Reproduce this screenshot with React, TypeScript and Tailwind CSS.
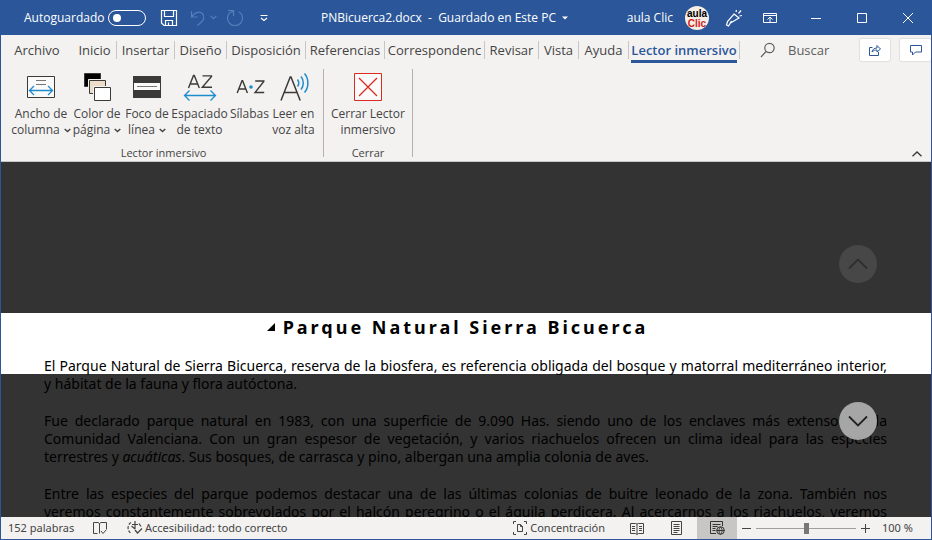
import React from 'react';
import clsx from 'clsx';

const tabs = [
  { name: 'Archivo', width: 'w-[72px]', divider: false },
  { name: 'Inicio', width: 'w-[44px]', divider: true },
  { name: 'Insertar', width: 'w-[58px]', divider: true },
  { name: 'Diseño', width: 'w-[52px]', divider: true },
  { name: 'Disposición', width: 'w-[79px]', divider: true },
  { name: 'Referencias', width: 'w-[79px]', divider: true },
  { name: 'Correspondenc', width: 'w-[100px]', divider: true },
  { name: 'Revisar', width: 'w-[54px]', divider: true },
  { name: 'Vista', width: 'w-[40px]', divider: true },
  { name: 'Ayuda', width: 'w-[50px]', divider: true },
  { name: 'Lector inmersivo', width: 'w-[111px]', divider: true, active: true },
];

function Caret() {
  return (
    <svg className="ml-1 inline-block" width="7" height="5" viewBox="0 0 7 5" fill="none" stroke="#444" strokeWidth="1.4">
      <path d="M.7 .9 3.5 3.6 6.3 .9" />
    </svg>
  );
}

function RibbonButton({ icon, lines, caret, width }: { icon: React.ReactNode; lines: string[]; caret?: boolean; width: string }) {
  return (
    <button className={clsx('flex flex-col items-center gap-px leading-4 whitespace-nowrap', width)}>
      {icon}
      <span>
        {lines[0]}
        {lines[1] && <br />}
        {lines[1]}
        {caret && <Caret />}
      </span>
    </button>
  );
}

const iconProps = { width: 36, height: 36, viewBox: '0 0 36 36', fill: 'none', stroke: '#3b3a39' };

function ColumnWidthIcon() {
  return (
    <svg {...iconProps}>
      <path d="M4.500 7.500h27v21h-27z" fill="#fafafa" />
      <path d="M13 11.500h10M13 15.500h10" stroke="#797775" />
      <path d="M7 21.500h22M11 17l-4.500 4.500L11 26M25 17l4.500 4.500L25 26" stroke="#1e8bcd" strokeWidth="1.300" />
    </svg>
  );
}

function PageColorIcon() {
  return (
    <svg {...iconProps}>
      <path d="M5.500 4.500h16v13h-16z" fill="#000" />
      <path d="M9.500 10.500h18v14h-18z" fill="#f3f2f1" stroke="#f3f2f1" />
      <path d="M10.500 11.500h16v13h-16z" fill="#eddcc8" />
      <path d="M14.500 17.500h18v14h-18z" fill="#f3f2f1" stroke="#f3f2f1" />
      <path d="M15.500 18.500h16v13h-16z" fill="#fff" />
    </svg>
  );
}

function LineFocusIcon() {
  return (
    <svg {...iconProps}>
      <path d="M4 7h28v22H4z" fill="#3b3a39" stroke="none" />
      <path d="M5 14h26v7H5z" fill="#fafafa" stroke="none" />
      <path d="M8 17.500h20" stroke="#797775" />
    </svg>
  );
}

function TextSpacingIcon() {
  return (
    <svg {...iconProps}>
      <path d="m6.500 19 5-12.500h.8l5 12.500M8.200 15h7.400" strokeWidth="1.400" />
      <path d="M20.500 6.900h9v.6L20.300 18.300h9.700" strokeWidth="1.400" />
      <path d="M2.500 26.500h31M7.500 21.500l-5 5 5 5M28.500 21.500l5 5-5 5" stroke="#1e8bcd" strokeWidth="1.300" />
    </svg>
  );
}

function SyllablesIcon() {
  return (
    <svg {...iconProps}>
      <path d="m5.200 24 4.800-12.300h.6l4.800 12.300M6.800 20h7" strokeWidth="1.400" />
      <path d="M23.200 12h8.600v.5L23 23.500h9.200" strokeWidth="1.400" />
      <circle cx="19" cy="18" r="1.800" fill="#1e8bcd" stroke="none" />
    </svg>
  );
}

function ReadAloudIcon() {
  return (
    <svg {...iconProps}>
      <path d="m5 31.500 9.200-23.500h.8l9.200 23.500M8.300 23.500h12.600" strokeWidth="1.500" />
      <path d="M21.500 10.500c1.500 2 1.500 5 0 7M25 7.500c3 3.500 3 9.500 0 13M28.500 4.500c4.500 5 4.500 14 0 19" stroke="#1e8bcd" strokeWidth="1.500" />
    </svg>
  );
}

function CloseReaderIcon() {
  return (
    <svg {...iconProps} stroke="#d92b20">
      <path d="M4.500 4.500h27v27h-27z" fill="#fafafa" />
      <path d="m9 9 18 18M27 9 9 27" strokeWidth="1.300" />
    </svg>
  );
}

function TitleBar() {
  return (
    <header className="flex h-[35px] shrink-0 items-center bg-[#2b579a] text-white">
      <div className="flex w-[272px] items-center pl-[23px]">
        <label htmlFor="autosave" className="w-[84px]">Autoguardado</label>
        <input
          id="autosave"
          type="checkbox"
          className="h-4 w-[38px] appearance-none rounded-full border border-white before:ml-1 before:mt-[3px] before:block before:h-2 before:w-2 before:rounded-full before:bg-white"
        />
        <button aria-label="Guardar" className="ml-[14px]">
          <svg width="18" height="18" viewBox="0 0 18 18" fill="none" stroke="white" strokeWidth="1.200">
            <path d="M1.500 1.500h15v15H4l-2.500-2.500zM4.500 1.500v6h9v-6M5.500 16.500v-5h7v5M8.500 16.500v-3" />
          </svg>
        </button>
        <button aria-label="Deshacer" className="ml-3 flex items-center gap-1">
          <svg width="16" height="18" viewBox="0 0 16 18" fill="none" stroke="#557fb9" strokeWidth="1.200">
            <path d="M1.500 2v6h6M1.800 7.800C4 4 9 1.500 12.300 4.500c3 3 1 7-1 8.500L7.500 16.500" />
          </svg>
          <svg width="7" height="5" viewBox="0 0 7 5" fill="none" stroke="#557fb9" strokeWidth="1.200">
            <path d="M.7 .9 3.500 3.600 6.300 .9" />
          </svg>
        </button>
        <button aria-label="Rehacer" className="ml-[9px]">
          <svg width="18" height="18" viewBox="0 0 18 18" fill="none" stroke="#557fb9" strokeWidth="1.200">
            <path d="M2 1.500h5.500V7M7.500 2C3 3 1.500 6.500 1.500 9.500a7.500 7 0 0 0 15 0c0-3-1.500-5.500-3.500-6.500" />
          </svg>
        </button>
        <button aria-label="Personalizar" className="ml-4">
          <svg width="8" height="8" viewBox="0 0 8 8" fill="none" stroke="white" strokeWidth="1.200">
            <path d="M.5 1.500h7M1 4l3 2.500L7 4" />
          </svg>
        </button>
      </div>
      <div className="flex flex-1 items-center justify-center gap-[6px] whitespace-pre">
        <h1>PNBicuerca2.docx  -  Guardado en Este PC</h1>
        <svg width="6" height="4" viewBox="0 0 6 4" fill="white"><path d="M0 .5h6L3 3.500z" /></svg>
      </div>
      <div className="flex w-[315px] items-center justify-end">
        <span className="mr-3">aula Clic</span>
        <div className="flex h-6 w-6 flex-col items-center justify-center overflow-hidden rounded-full bg-[#f6ede4] pt-[2px] font-['Liberation_Sans',sans-serif] text-[10px] font-bold leading-[10px]">
          <span className="text-black">aula</span>
          <span className="text-[#d0201c]">Clic</span>
        </div>
        <button aria-label="Novedades" className="mr-[2px] ml-[14px] flex w-[22px] justify-center">
          <svg width="18" height="18" viewBox="0 0 18 18" fill="none" stroke="white" strokeWidth="1.200">
            <path d="m9 5 5 4-8.500 5L3.500 17 1.500 16l1-3.500zM5 14l1.500-2M11 3l.5-2M13.500 4.500 16 1.500M14.500 7l2.500-.5" />
          </svg>
        </button>
        <button aria-label="Opciones de la cinta" className="flex w-[46px] justify-center">
          <svg width="14" height="12" viewBox="0 0 14 12" fill="none" stroke="white">
            <path d="M.5 1.500h13v9H.5zM.5 3.500h13M7 10V5.500M4.500 7.500 7 5l2.500 2.500" />
          </svg>
        </button>
        <button aria-label="Minimizar" className="flex w-[46px] justify-center">
          <svg width="10" height="10" viewBox="0 0 10 10" stroke="white"><path d="M0 5.500h10" /></svg>
        </button>
        <button aria-label="Maximizar" className="flex w-[46px] justify-center">
          <svg width="10" height="10" viewBox="0 0 10 10" stroke="white" fill="none"><path d="M.5 .5h9v9h-9z" /></svg>
        </button>
        <button aria-label="Cerrar" className="flex w-[46px] justify-center">
          <svg width="10" height="10" viewBox="0 0 10 10" stroke="white"><path d="m0 0 10 10M10 0 0 10" /></svg>
        </button>
      </div>
    </header>
  );
}

function TabRow() {
  return (
    <nav className="flex h-[30px] items-start overflow-hidden pt-1 text-[13px]">
      {tabs.map((tab) => (
        <div key={tab.name} className={clsx('flex shrink-0 items-start', tab.width)}>
          <button
            className={clsx(
              'mx-auto flex h-6 items-start leading-[22px] whitespace-nowrap',
              tab.active && 'border-b-[3px] border-[#2b579a] font-semibold text-[#2b579a]'
            )}
          >
            {tab.name}
          </button>
          {tab.divider && <span className="mt-[2px] h-[18px] w-px bg-[#c8c6c4]" />}
        </div>
      ))}
      <label className="ml-[20px] flex flex-1 items-center gap-3 text-[#605e5c]">
        <svg width="16" height="22" viewBox="0 0 16 22" fill="none" stroke="#605e5c" strokeWidth="1.200">
          <circle cx="9.500" cy="9" r="4.700" />
          <path d="m6 12.500-5 5.500" />
        </svg>
        <input type="text" placeholder="Buscar" aria-label="Buscar" className="h-[22px] w-14 bg-transparent placeholder:text-[#605e5c]" />
      </label>
      <button aria-label="Compartir" className="flex h-[22px] w-[30px] shrink-0 items-center justify-center rounded-[2px] bg-white shadow-[0_0_1px_1px_#e1dfdd]">
        <svg width="12" height="12" viewBox="0 0 12 12" fill="none" stroke="#2b579a">
          <path d="M3.500 3.500h-3v8h9V8M3 8c.5-2.500 2-4 5-4V1.500L11.500 5 8 8V6C6 6 4.500 6.500 3 8z" />
        </svg>
      </button>
      <button aria-label="Comentarios" className="ml-[10px] flex h-[22px] w-[31px] shrink-0 items-center justify-center rounded-[2px] bg-white shadow-[0_0_1px_1px_#e1dfdd]">
        <svg width="12" height="12" viewBox="0 0 12 12" fill="none" stroke="#2b579a">
          <path d="M.5 1.500h11v6.500h-6l-3 3V8h-2z" />
        </svg>
      </button>
    </nav>
  );
}

function Ribbon() {
  return (
    <div className="flex h-[97px] items-start border-b border-[#c8c6c4] pt-1">
      <section className="flex h-[88px] flex-col justify-between border-r border-[#b3b0ad] pl-[10px] pr-[7px]">
        <div className="flex items-start">
          <RibbonButton icon={<ColumnWidthIcon />} lines={['Ancho de', 'columna']} caret width="w-[60px]" />
          <RibbonButton icon={<PageColorIcon />} lines={['Color de', 'página']} caret width="w-[52px]" />
          <RibbonButton icon={<LineFocusIcon />} lines={['Foco de', 'línea']} caret width="w-[48px]" />
          <RibbonButton icon={<TextSpacingIcon />} lines={['Espaciado', 'de texto']} width="w-[57px]" />
          <RibbonButton icon={<SyllablesIcon />} lines={['Sílabas']} width="w-[43px]" />
          <RibbonButton icon={<ReadAloudIcon />} lines={['Leer en', 'voz alta']} width="w-[45px]" />
        </div>
        <h2 className="text-center text-[11px] leading-[8px]">Lector inmersivo</h2>
      </section>
      <section className="flex h-[88px] w-[89px] flex-col items-center justify-between border-r border-[#b3b0ad]">
        <RibbonButton icon={<CloseReaderIcon />} lines={['Cerrar Lector', 'inmersivo']} width="w-[80px]" />
        <h2 className="text-[11px] leading-[8px]">Cerrar</h2>
      </section>
      <button aria-label="Contraer la cinta" className="mr-[9px] ml-auto self-end pb-1">
        <svg width="10" height="6" viewBox="0 0 10 6" fill="none" stroke="#3b3a39" strokeWidth="1.300">
          <path d="M.5 5.300 5 1l4.500 4.300" />
        </svg>
      </button>
    </div>
  );
}

function Document() {
  return (
    <main className="relative min-h-0 flex-1 overflow-hidden bg-[#333] font-['Noto_Sans',sans-serif] text-[14px] leading-[18px] text-black">
      <div className="h-[151px]" />
      <div className="h-[61px] bg-white pr-11 pl-[43px]">
        <h2 className="flex items-center justify-center gap-2 pr-4 pb-4 text-[18px] font-bold leading-7 tracking-[3px]">
          <svg width="8" height="8" viewBox="0 0 8 8"><path d="M8 0v8H0z" /></svg>
          Parque Natural Sierra Bicuerca
        </h2>
        <p className="whitespace-nowrap [text-align-last:justify]">
          El Parque Natural de Sierra Bicuerca, reserva de la biosfera, es referencia obligada del bosque y matorral mediterráneo interior,
        </p>
      </div>
      <div className="pt-px pr-11 pl-[43px] whitespace-nowrap">
        <p>y hábitat de la fauna y flora autóctona.</p>
        <p className="mt-[19px] [text-align-last:justify]">
          Fue declarado parque natural en 1983, con una superficie de 9.090 Has. siendo uno de los enclaves más extensos de la
        </p>
        <p className="[text-align-last:justify]">
          Comunidad Valenciana. Con un gran espesor de vegetación, y varios riachuelos ofrecen un clima ideal para las especies
        </p>
        <p>
          terrestres y <em>acuáticas</em>. Sus bosques, de carrasca y pino, albergan una amplia colonia de aves.
        </p>
        <p className="mt-[19px] [text-align-last:justify]">
          Entre las especies del parque podemos destacar una de las últimas colonias de buitre leonado de la zona. También nos
        </p>
        <p className="[text-align-last:justify]">
          veremos constantemente sobrevolados por el halcón peregrino o el águila perdicera. Al acercarnos a los riachuelos, veremos
        </p>
      </div>
      <button aria-label="Subir" className="absolute top-[83px] right-[54px] flex h-[38px] w-[38px] items-center justify-center rounded-full bg-[#474747]">
        <svg width="20" height="12" viewBox="0 0 20 12" fill="none" stroke="#2e2e2e" strokeWidth="1.800"><path d="m1 10.500 9-9 9 9" /></svg>
      </button>
      <button aria-label="Bajar" className="absolute top-[240px] right-[54px] flex h-[38px] w-[38px] items-center justify-center rounded-full bg-[#adadad]/95">
        <svg width="20" height="12" viewBox="0 0 20 12" fill="none" stroke="#222" strokeWidth="1.800"><path d="m1 1.500 9 9 9-9" /></svg>
      </button>
    </main>
  );
}

function StatusBar() {
  return (
    <footer className="flex h-[22px] shrink-0 items-center bg-[#f3f2f1] font-['Noto_Sans',sans-serif] text-[11px]">
      <span className="ml-[7px] w-[85px]">152 palabras</span>
      <button aria-label="Revisión ortográfica" className="w-[34px]">
        <svg width="14" height="14" viewBox="0 0 14 14" fill="none" stroke="#444">
          <path d="M6.500 12.500v-10L5 1.500H.5v11h4M6.500 2.500 8 1.500h5.500V8M8 10l2 2.500 3.500-4" />
        </svg>
      </button>
      <button className="flex items-center gap-[2px]">
        <svg width="16" height="14" viewBox="0 0 16 14" fill="none" stroke="#444" strokeWidth="1.200">
          <path d="M4 1.500C0 4 0 10 4.500 12.500" strokeDasharray="3 1.500" />
          <path d="M8 0v8M4.500 5 8 8M5 3.500h6M8 9l2.500 3 4.500-4.500M12 2.500l2 3" />
        </svg>
        Accesibilidad: todo correcto
      </button>
      <button className="ml-auto flex items-center gap-[3px]">
        <svg width="14" height="14" viewBox="0 0 14 14" fill="none" stroke="#444">
          <path d="M3 .5H.5V3M11 .5h2.500V3M3 13.500H.5V11M11 13.500h2.500V11M4.500 3.500h3l2 2v5h-5zM7.500 3.500v2h2" />
        </svg>
        Concentración
      </button>
      <button aria-label="Modo de lectura" className="ml-[25px]">
        <svg width="14" height="13" viewBox="0 0 14 13" fill="none" stroke="#444">
          <path d="M7 12.500V2L5.500 1.500h-5v10h5L7 12.500l1.500-1h5v-10h-5L7 2M2 4.500h3M2 6.500h3M2 8.500h3M9 4.500h3M9 6.500h3M9 8.500h3" />
        </svg>
      </button>
      <button aria-label="Diseño de impresión" className="mr-[14px] ml-[27px]">
        <svg width="12" height="14" viewBox="0 0 12 14" fill="none" stroke="#444">
          <path d="M.5 .5h10v13H.5zM2.500 3.500h6M2.500 5.500h6M2.500 7.500h6M2.500 9.500h6M2.500 11.500h4" />
        </svg>
      </button>
      <button aria-label="Diseño web" className="flex h-full w-10 items-center justify-center bg-[#c8c6c4]">
        <svg width="15" height="14" viewBox="0 0 15 14" fill="none" stroke="#333">
          <path d="M6 12.500H.5V.5h12V5M2.500 3.500h8M2.500 5.500h5M2.500 7.500h3M2.500 9.500h3" />
          <circle cx="10.500" cy="9.500" r="3.800" />
          <path d="M6.500 9.500h8M10.500 6c-2 2-2 5 0 7.500M10.500 6c2 2 2 5 0 7.500" />
        </svg>
      </button>
      <button aria-label="Alejar" className="ml-[5px]">
        <svg width="9" height="9" viewBox="0 0 9 9" stroke="#444"><path d="M0 4.500h9" /></svg>
      </button>
      <input
        type="range"
        aria-label="Zoom"
        defaultValue={50}
        className="mx-[5px] h-3 w-[100px] appearance-none bg-transparent [&::-webkit-slider-runnable-track]:h-px [&::-webkit-slider-runnable-track]:bg-[#a19f9d] [&::-webkit-slider-thumb]:-mt-[5px] [&::-webkit-slider-thumb]:h-[11px] [&::-webkit-slider-thumb]:w-[5px] [&::-webkit-slider-thumb]:appearance-none [&::-webkit-slider-thumb]:bg-[#797775]"
      />
      <button aria-label="Acercar">
        <svg width="9" height="9" viewBox="0 0 9 9" stroke="#444"><path d="M0 4.500h9M4.500 0v9" /></svg>
      </button>
      <span className="mr-[17px] ml-3 w-8 whitespace-nowrap">100 %</span>
    </footer>
  );
}

export default function App() {
  return (
    <div className="flex h-screen flex-col overflow-hidden border-x border-b border-[#2b579a] bg-[#f3f2f1] font-['Open_Sans',sans-serif] text-[12px] text-[#444]">
      <TitleBar />
      <TabRow />
      <Ribbon />
      <Document />
      <StatusBar />
    </div>
  );
}
